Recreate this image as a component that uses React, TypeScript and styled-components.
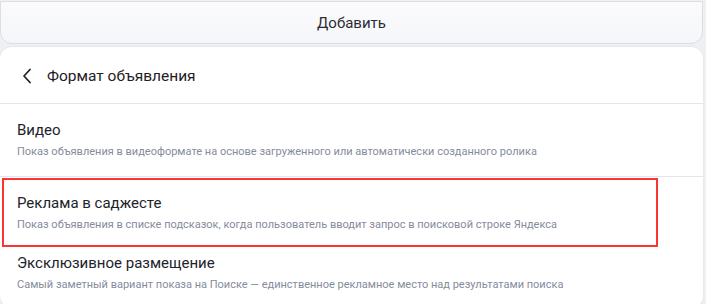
import React from "react";
import styled, { createGlobalStyle } from "styled-components";

const Global = createGlobalStyle`
  html, body { margin: 0; padding: 0; background: #eef0f4; }
  body { font-family: Roboto, "Noto Sans", "Liberation Sans", sans-serif; -webkit-font-smoothing: antialiased; }
  * { box-sizing: border-box; }
`;

const Page = styled.div`
  width: 706px;
  height: 304px;
  overflow: hidden;
  display: flex;
  flex-direction: column;
  gap: 3px;
  padding: 1px 3px 0 0;
  background: #eef0f4;
`;

const AddButton = styled.button`
  height: 43px;
  flex: none;
  width: 100%;
  border: 1px solid #dcdee6;
  border-radius: 0 0 12px 12px;
  background: linear-gradient(180deg, #fbfbfd 0%, #f5f6f9 100%);
  font-family: inherit;
  font-size: 15px;
  color: #2b2c33;
  cursor: pointer;
`;

const Card = styled.section`
  flex: 1;
  background: #fff;
  border-radius: 12px;
  display: flex;
  flex-direction: column;
  box-shadow: 0 0 3px rgba(40, 50, 90, 0.08);
`;

const Header = styled.div`
  height: 57px;
  display: flex;
  align-items: center;
  gap: 15px;
  padding-left: 22px;
  padding-top: 2px;
  border-bottom: 1px solid #e4e5ec;
  font-size: 15.5px;
  font-weight: 400;
  color: #1f2026;
`;

const Row = styled.div<{ $divider?: boolean; $pb: number; $highlight?: boolean }>`
  position: relative;
  display: flex;
  flex-direction: column;
  gap: 5px;
  padding: 16px 17px ${(p) => p.$pb}px;
  border-bottom: ${(p) => (p.$divider ? "1px solid #e4e5ec" : "none")};
  ${(p) =>
    p.$highlight &&
    `
    &::after {
      content: "";
      position: absolute;
      left: 2px;
      top: 1px;
      width: 652px;
      height: 65px;
      border: 2px solid #fb3434;
      pointer-events: none;
    }
  `}
`;

const Title = styled.div`
  font-size: 15px;
  line-height: 20px;
  color: #22232a;
`;

const Desc = styled.div`
  font-size: 11px;
  line-height: 14px;
  color: #868b9c;
`;

const Chevron = () => (
  <svg width="10" height="16" viewBox="0 0 10 16" fill="none">
    <path d="M8 1.5 L2 8 L8 14.5" stroke="#24252b" strokeWidth="1.8" strokeLinecap="round" strokeLinejoin="round" />
  </svg>
);

const items = [
  {
    title: "Видео",
    desc: "Показ объявления в видеоформате на основе загруженного или автоматически созданного ролика",
    divider: true,
    pb: 17,
  },
  {
    title: "Реклама в саджесте",
    desc: "Показ объявления в списке подсказок, когда пользователь вводит запрос в поисковой строке Яндекса",
    highlight: true,
    pb: 5,
  },
  {
    title: "Эксклюзивное размещение",
    desc: "Самый заметный вариант показа на Поиске — единственное рекламное место над результатами поиска",
    pb: 16,
  },
];

export default function App() {
  return (
    <>
      <Global />
      <Page>
        <AddButton>Добавить</AddButton>
        <Card>
          <Header>
            <Chevron />
            <span>Формат объявления</span>
          </Header>
          {items.map((it) => (
            <Row key={it.title} $divider={it.divider} $pb={it.pb} $highlight={it.highlight}>
              <Title>{it.title}</Title>
              <Desc>{it.desc}</Desc>
            </Row>
          ))}
        </Card>
      </Page>
    </>
  );
}
